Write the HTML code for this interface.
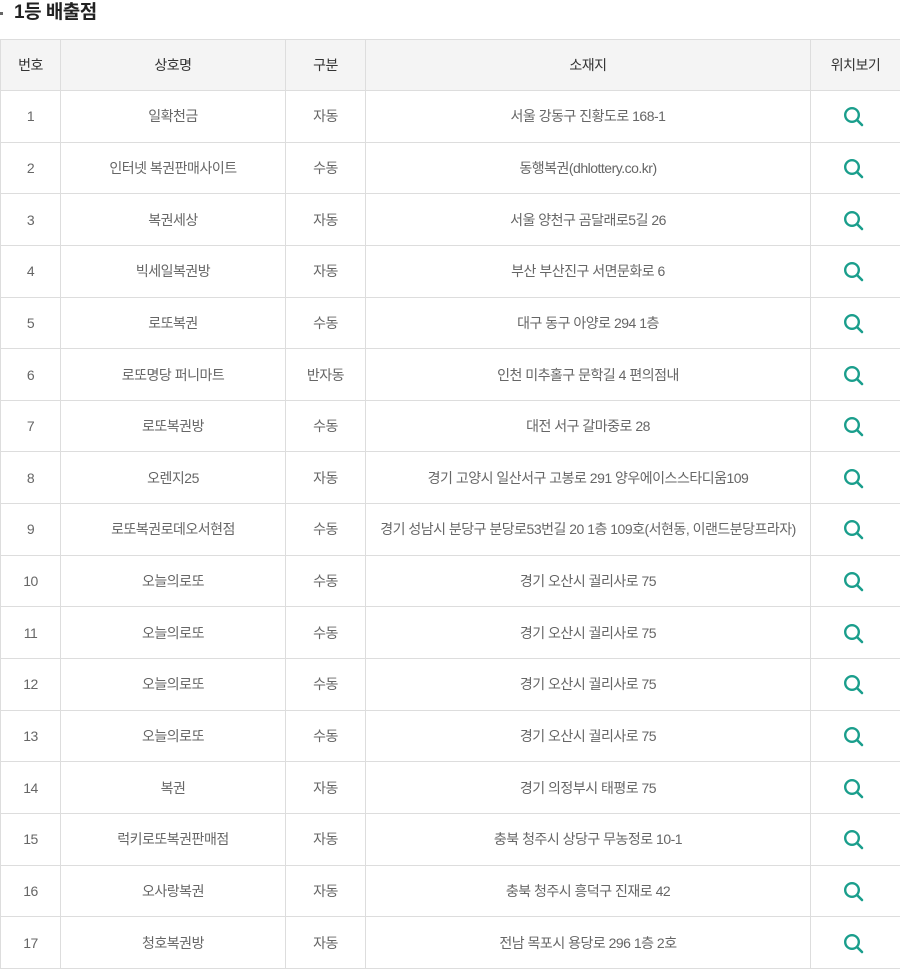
<!DOCTYPE html>
<html><head><meta charset="utf-8"><style>
body{margin:0;background:#fff;font-family:"Liberation Sans","Noto Sans CJK KR",sans-serif;width:900px;height:970px;overflow:hidden;position:relative}
.t{position:absolute;left:14px;top:1px;font-size:19px;font-weight:bold;color:#222;line-height:24px;letter-spacing:-0.5px}
.b{position:absolute;left:0;top:12px;width:3px;height:3px;background:#666}
table{position:absolute;left:0;top:39px;width:900px;border-collapse:collapse;table-layout:fixed;border-top:1px solid #333}
td,th{border:1px solid #ddd;text-align:center;font-size:14px;color:#666;font-weight:normal;padding:0;letter-spacing:-0.5px}
th{background:#f4f4f4;color:#333;height:50px}
td{height:50.65px}
svg{display:block;margin:0 auto;position:relative;left:-2px;top:1px}
</style></head><body>
<div class="b"></div><div class="t">1등 배출점</div>
<table>
<colgroup><col style="width:60px"><col style="width:225px"><col style="width:80px"><col style="width:445px"><col style="width:90px"></colgroup>
<tr><th>번호</th><th>상호명</th><th>구분</th><th>소재지</th><th>위치보기</th></tr>
<tr><td>1</td><td>일확천금</td><td>자동</td><td>서울 강동구 진황도로 168-1</td><td>Q</td></tr>
<tr><td>2</td><td>인터넷 복권판매사이트</td><td>수동</td><td>동행복권(dhlottery.co.kr)</td><td>Q</td></tr>
<tr><td>3</td><td>복권세상</td><td>자동</td><td>서울 양천구 곰달래로5길 26</td><td>Q</td></tr>
<tr><td>4</td><td>빅세일복권방</td><td>자동</td><td>부산 부산진구 서면문화로 6</td><td>Q</td></tr>
<tr><td>5</td><td>로또복권</td><td>수동</td><td>대구 동구 아양로 294 1층</td><td>Q</td></tr>
<tr><td>6</td><td>로또명당 퍼니마트</td><td>반자동</td><td>인천 미추홀구 문학길 4 편의점내</td><td>Q</td></tr>
<tr><td>7</td><td>로또복권방</td><td>수동</td><td>대전 서구 갈마중로 28</td><td>Q</td></tr>
<tr><td>8</td><td>오렌지25</td><td>자동</td><td>경기 고양시 일산서구 고봉로 291 양우에이스스타디움109</td><td>Q</td></tr>
<tr><td>9</td><td>로또복권로데오서현점</td><td>수동</td><td>경기 성남시 분당구 분당로53번길 20 1층 109호(서현동, 이랜드분당프라자)</td><td>Q</td></tr>
<tr><td>10</td><td>오늘의로또</td><td>수동</td><td>경기 오산시 궐리사로 75</td><td>Q</td></tr>
<tr><td>11</td><td>오늘의로또</td><td>수동</td><td>경기 오산시 궐리사로 75</td><td>Q</td></tr>
<tr><td>12</td><td>오늘의로또</td><td>수동</td><td>경기 오산시 궐리사로 75</td><td>Q</td></tr>
<tr><td>13</td><td>오늘의로또</td><td>수동</td><td>경기 오산시 궐리사로 75</td><td>Q</td></tr>
<tr><td>14</td><td>복권</td><td>자동</td><td>경기 의정부시 태평로 75</td><td>Q</td></tr>
<tr><td>15</td><td>럭키로또복권판매점</td><td>자동</td><td>충북 청주시 상당구 무농정로 10-1</td><td>Q</td></tr>
<tr><td>16</td><td>오사랑복권</td><td>자동</td><td>충북 청주시 흥덕구 진재로 42</td><td>Q</td></tr>
<tr><td>17</td><td>청호복권방</td><td>자동</td><td>전남 목포시 용당로 296 1층 2호</td><td>Q</td></tr>
</table>
<script>
document.querySelectorAll('td:last-child').forEach(function(td){td.innerHTML='<svg width="22" height="22" viewBox="0 0 22 22"><circle cx="9" cy="9" r="6.8" fill="none" stroke="#1a9e8c" stroke-width="2.4"/><line x1="14" y1="14" x2="19" y2="19" stroke="#1a9e8c" stroke-width="2.6" stroke-linecap="round"/></svg>';});
</script>
</body></html>
